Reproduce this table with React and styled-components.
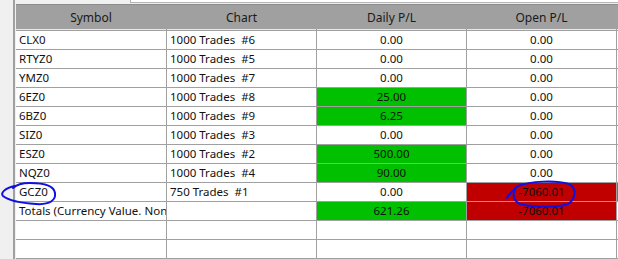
import React from 'react';
import styled, { createGlobalStyle } from 'styled-components';

const rows = [
  { symbol: 'CLX0', chart: '1000 Trades  #6', daily: '0.00', open: '0.00' },
  { symbol: 'RTYZ0', chart: '1000 Trades  #5', daily: '0.00', open: '0.00' },
  { symbol: 'YMZ0', chart: '1000 Trades  #7', daily: '0.00', open: '0.00' },
  { symbol: '6EZ0', chart: '1000 Trades  #8', daily: '25.00', open: '0.00', dailyTone: 'up' },
  { symbol: '6BZ0', chart: '1000 Trades  #9', daily: '6.25', open: '0.00', dailyTone: 'up' },
  { symbol: 'SIZ0', chart: '1000 Trades  #3', daily: '0.00', open: '0.00' },
  { symbol: 'ESZ0', chart: '1000 Trades  #2', daily: '500.00', open: '0.00', dailyTone: 'up' },
  { symbol: 'NQZ0', chart: '1000 Trades  #4', daily: '90.00', open: '0.00', dailyTone: 'up' },
  { symbol: 'GCZ0', chart: '750 Trades  #1', daily: '0.00', open: '-7060.01', openTone: 'down', extraTone: 'up' },
  { symbol: 'Totals (Currency Value. Non-Currency Values Excluded)', chart: '', daily: '621.26', open: '-7060.01', dailyTone: 'up', openTone: 'down' },
  { symbol: '', chart: '', daily: '', open: '' },
  { symbol: '', chart: '', daily: '', open: '' },
];

const tones = {
  up: '#00c000',
  down: '#c00000',
};

const App = () => (
  <>
    <GlobalStyle />
    <Window>
      <Gutter />
      <Frame>
        <TopStrip>
          <FieldStub />
        </TopStrip>
        <Grid>
          <HeadCell>Symbol</HeadCell>
          <HeadCell>Chart</HeadCell>
          <HeadCell>Daily P/L</HeadCell>
          <HeadCell>Open P/L</HeadCell>
          <HeadCell />
          {rows.map((r, i) => (
            <React.Fragment key={i}>
              <Cell>{r.symbol}</Cell>
              <Cell>{r.chart}</Cell>
              <Cell align="center" tone={r.dailyTone}>{r.daily}</Cell>
              <Cell align="center" tone={r.openTone}>{r.open}</Cell>
              <Cell tone={r.extraTone} />
            </React.Fragment>
          ))}
        </Grid>
      </Frame>
      <Marks viewBox="0 0 618 259">
        <path d="M15 186 C 5 188, 0 193, 3 196 C 8 200, 20 203, 36 204 C 50 205, 56 200, 55 193 C 54 186, 44 183, 30 183 C 22 183, 16 185, 13 188" />
        <path d="M507 198 C 510 193, 514 189, 518 186 C 530 181, 556 180, 569 184 C 577 188, 576 199, 568 204 C 558 208, 530 207, 520 204 C 514 201, 512 195, 515 190" />
      </Marks>
    </Window>
  </>
);

const GlobalStyle = createGlobalStyle`
  body {
    margin: 0;
    background: #f0f0f0;
    overflow: hidden;
  }
`;

const Window = styled.div`
  position: relative;
  display: flex;
  width: 618px;
  height: 259px;
  overflow: hidden;
  font-family: 'Noto Sans', 'Open Sans', sans-serif;
  font-size: 11.5px;
  color: #111;
`;

const Gutter = styled.div`
  flex: 0 0 13px;
  background: #f0f0f0;
`;

const Frame = styled.div`
  display: flex;
  flex-direction: column;
  border-left: 2px solid #a0a0a0;
  padding-left: 1px;
  background: #f0f0f0;
  flex: 1 0 auto;
`;

const TopStrip = styled.div`
  height: 9px;
`;

const FieldStub = styled.div`
  margin-left: 114px;
  height: 2px;
  width: 800px;
  background: #fff;
  border-left: 1px solid #b4b4b4;
  border-bottom: 1px solid #b4b4b4;
`;

const Grid = styled.div`
  display: grid;
  grid-template-columns: 151px 150px 150px 150px 150px;
  grid-auto-rows: 19px;
  grid-template-rows: 26px;
  border-top: 1px solid #8c8c8c;
  background: #fff;
`;

const HeadCell = styled.div`
  display: flex;
  align-items: center;
  justify-content: center;
  background: #a0a0a0;
  border-right: 1px solid #a0a0a0;
  border-bottom: 1px solid #a0a0a0;
  box-shadow: inset 0 -1px 0 #e8e8e8;
  color: #1a1a1a;
  font-size: 12px;
`;

const Cell = styled.div`
  display: flex;
  align-items: center;
  justify-content: ${p => (p.align === 'center' ? 'center' : 'flex-start')};
  padding: 0 ${p => (p.align === 'center' ? '0' : '3px')};
  background: ${p => (p.tone ? tones[p.tone] : '#fff')};
  border-right: 1px solid #a0a0a0;
  border-bottom: 1px solid #a0a0a0;
  white-space: pre;
  overflow: hidden;
  line-height: 18px;
`;

const Marks = styled.svg`
  position: absolute;
  left: 0;
  top: 0;
  width: 618px;
  height: 259px;
  pointer-events: none;

  path {
    fill: none;
    stroke: #1010e0;
    stroke-width: 2;
    stroke-linecap: round;
  }
`;

export default App;
